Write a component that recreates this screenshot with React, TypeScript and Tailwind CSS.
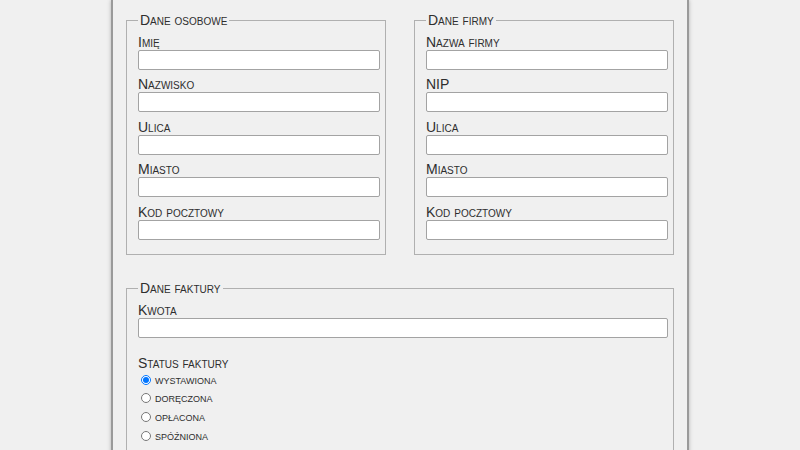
import React from 'react'

const personal = ['Imię', 'Nazwisko', 'Ulica', 'Miasto', 'Kod pocztowy']
const company = ['Nazwa firmy', 'NIP', 'Ulica', 'Miasto', 'Kod pocztowy']
const statuses = ['wystawiona', 'doręczona', 'opłacona', 'spóźniona']

function Field({ label, first }: { label: string; first?: boolean }) {
  return (
    <div>
      <label className={`block leading-4 text-[14px] text-[#2e2e2e] ${first ? 'pt-[5.5px]' : 'pt-[6.5px]'}`}>
        {label}
      </label>
      <input
        type="text"
        className="block w-full h-[20px] bg-white border border-[#a3a3a3] rounded-[2px] outline-none"
      />
    </div>
  )
}

function Box({ title, children, className = '' }: { title: string; children: React.ReactNode; className?: string }) {
  return (
    <fieldset className={`border border-[#b0b0b0] pl-[11px] pr-[5px] pb-[14.5px] ${className}`}>
      <legend className="px-[2px] leading-4 text-[14px] text-[#2e2e2e]">{title}</legend>
      {children}
    </fieldset>
  )
}

export default function App() {
  return (
    <div
      className="min-h-[450px] bg-[#f0f0f0] [font-variant:small-caps]"
      style={{ fontFamily: '"Liberation Sans", Arial, sans-serif' }}
    >
      <div className="mx-auto w-[578px] min-h-[450px] border-x-2 border-[#9a9a9a] shadow-[0_0_4px_rgba(0,0,0,0.25)] px-[13px] pt-3">
        <div className="grid grid-cols-2 gap-[28px]">
          <Box title="Dane osobowe">
            {personal.map((l, i) => (
              <Field key={l} label={l} first={i === 0} />
            ))}
          </Box>
          <Box title="Dane firmy">
            {company.map((l, i) => (
              <Field key={l} label={l} first={i === 0} />
            ))}
          </Box>
        </div>

        <Box title="Dane faktury" className="mt-[25px]">
          <Field label="Kwota" first />
          <div className="pt-[17px] leading-4 text-[14px] text-[#2e2e2e]">Status faktury</div>
          <div className="flex flex-col">
            {statuses.map((s, i) => (
              <label key={s} className="flex items-center h-[18.67px] text-[13.5px] text-[#2e2e2e]">
                <input
                  type="radio"
                  name="status"
                  defaultChecked={i === 0}
                  className="w-[10px] h-[10px] ml-[3px] mr-[4px]"
                />
                {s}
              </label>
            ))}
          </div>
        </Box>
      </div>
    </div>
  )
}
